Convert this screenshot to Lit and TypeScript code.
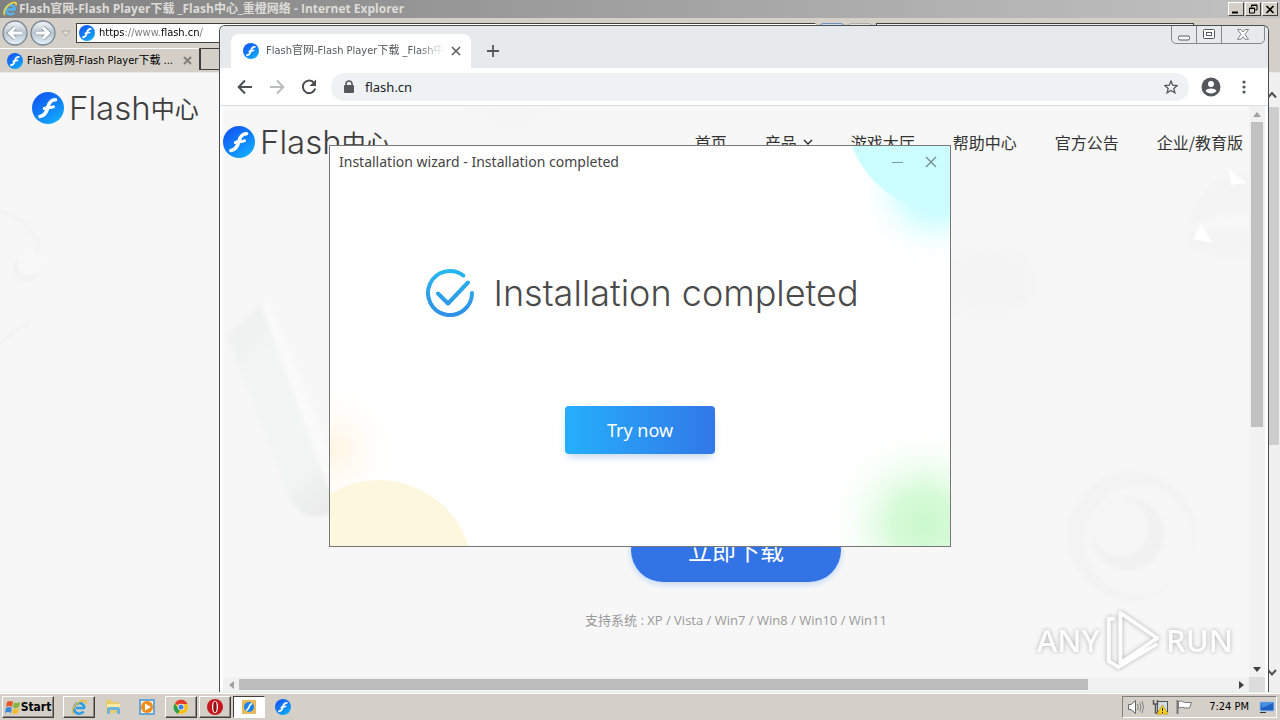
import { LitElement, html, css, svg } from "lit";
import { customElement, property } from "lit/decorators.js";

@customElement("flash-mark")
class FlashMark extends LitElement {
  static styles = css`
    :host { display: block; flex: none; }
    svg { display: block; width: 100%; height: 100%; }
  `;
  render() {
    return html`<svg viewBox="0 0 32 32" aria-hidden="true">
      <defs>
        <linearGradient id="g" x1="0.1" y1="0" x2="0.8" y2="1">
          <stop offset="0" stop-color="#1450ee" />
          <stop offset="0.5" stop-color="#0f7cfa" />
          <stop offset="1" stop-color="#14b0ff" />
        </linearGradient>
      </defs>
      <circle cx="16" cy="16" r="16" fill="url(#g)" />
      <path d="M23.500 7.800C18.500 7.800 17 11 16 15C14.700 20 12.500 24 8 24.500" fill="none" stroke="#fff" stroke-width="3.600" stroke-linecap="round" />
      <path d="M12.300 16.600C15 14.800 18 16.700 21.500 14.800" fill="none" stroke="#fff" stroke-width="3" stroke-linecap="round" />
    </svg>`;
  }
}

@customElement("flash-brand")
class FlashBrand extends LitElement {
  static styles = css`
    :host { display: flex; align-items: center; gap: 5px; height: 40px; color: #3f3f3f; }
    flash-mark { width: 32px; height: 32px; }
    .name { display: flex; align-items: center; font: 350 33px/36px Inter, sans-serif; white-space: nowrap; }
    .cjk { font: 400 24px/36px "Noto Sans CJK SC", sans-serif; }
  `;
  render() {
    return html`<flash-mark></flash-mark><span class="name">Flash<span class="cjk">中心</span></span>`;
  }
}

@customElement("ie-window")
class IeWindow extends LitElement {
  static styles = css`
    :host { display: flex; flex-direction: column; background: #d4d0c8; font: 11px/16px "DejaVu Sans Condensed", "Noto Sans CJK SC", sans-serif; color: #000; }
    button, input { font: inherit; padding: 0; margin: 0; border: 0; background: none; color: inherit; }
    svg { display: block; }
    .title { display: flex; align-items: center; gap: 1px; height: 18px; padding: 0 2px; background: linear-gradient(90deg, #808080, #c2c2c2); color: #dedbd6; }
    .title h1 { flex: 1; margin: 0; font: 700 12px/16px "Open Sans", "Noto Sans CJK SC", sans-serif; white-space: nowrap; }
    .box { width: 16px; height: 14px; background: #d4d0c8; border: 1px solid; border-color: #fff #404040 #404040 #fff; display: grid; place-items: center; color: #000; }
    .nav { display: flex; align-items: flex-start; height: 28px; padding: 2px 0 0 2px; gap: 4px; }
    .arrows { display: flex; gap: 2px; }
    .address { display: flex; align-items: center; gap: 4px; width: 740px; height: 20px; margin-top: 3px; padding-left: 2px; box-sizing: border-box; background: #fff; border: 1px solid #404040; border-right-color: #fff; }
    .address flash-mark, .tab flash-mark { width: 16px; height: 16px; }
    .address input { flex: 1; color: transparent; background: linear-gradient(90deg, #000 26px, #777 26px 61px, #000 61px 100px, #777 100px); -webkit-background-clip: text; background-clip: text; }
    .tool { width: 24px; height: 20px; margin-top: 3px; background: #cfe0f5; border: 1px solid #6f8fc0; border-radius: 3px; box-sizing: border-box; }
    .tool.plain { background: #e6e4e0; border-color: #aaa; }
    .field { width: 318px; height: 20px; margin-top: 3px; border: 1px solid #404040; box-sizing: border-box; background: #eee; }
    .tabs { display: flex; height: 24px; }
    .tab { display: flex; align-items: center; gap: 4px; width: 199px; padding: 0 7px; box-sizing: border-box; border-top: 1px solid #fff; }
    .tab span { flex: 1; white-space: nowrap; }
    .newtab { width: 40px; height: 22px; border: solid #404040; border-width: 1px 0 1px 2px; }
    .body { flex: 1; display: flex; min-height: 0; border-top: 1px solid #e8e8e8; background: #f7f7f7; }
    .page { flex: 1; position: relative; padding: 15px 0 0 32px; overflow: hidden; }
    .shade { position: absolute; left: 0; top: 130px; width: 42px; height: 150px; }
    .scroll { width: 17px; background: #f0f0f0; display: flex; flex-direction: column; }
    .scroll button { height: 34px; display: grid; place-items: end; padding: 0 2px 6px 0; }
    .scroll .thumb { flex: 339; background: #cdcdcd; margin-right: 1px; }
    .scroll .rest { flex: 214; }
  `;
  render() {
    return html`
      <div class="title">
        <svg width="16" height="16" viewBox="0 0 16 16"><path d="M13.500 8.500H5M13 8.500A4.700 4.700 0 1 0 12 11.600" fill="none" stroke="#4fb4f0" stroke-width="2.400" /><path d="M3 14C-1 12 6 2 12 1.500C14.500 1.300 14.500 3 13.800 4.500" fill="none" stroke="#f0d840" stroke-width="1.600" /></svg>
        <h1>Flash官网-Flash Player下载 _Flash中心_重橙网络 - Internet Explorer</h1>
        <button class="box" aria-label="Minimize"><svg width="10" height="9"><path d="M1 7.500H7" stroke="#000" stroke-width="2" /></svg></button>
        <button class="box" aria-label="Restore"><svg width="10" height="10"><path d="M3.500 3V1H9V6H7M3 1.500H9M1.500 4H6.500V9H1.500ZM1 4.500H7" fill="none" stroke="#000" /></svg></button>
        <button class="box" aria-label="Close"><svg width="10" height="9"><path d="M1.500 1L8.500 8M8.500 1L1.500 8" stroke="#000" stroke-width="1.700" /></svg></button>
      </div>
      <div class="nav">
        <div class="arrows">
          ${[0, 1].map((n) => html`<button aria-label=${n ? "Forward" : "Back"}>
            <svg width="26" height="26" viewBox="0 0 26 26"><defs><linearGradient id="b" x2="0" y2="1"><stop offset="0" stop-color="#f5f7f9" /><stop offset="0.5" stop-color="#b8c4cf" /><stop offset="1" stop-color="#e8f4fb" /></linearGradient></defs><circle cx="13" cy="13" r="12" fill="url(#b)" stroke="#7a8792" stroke-width="1.300" />
            <path d=${n ? "M6 13H18M13 7.500L18.500 13L13 18.500" : "M20 13H8M13 7.500L7.500 13L13 18.500"} fill="none" stroke="#8d9ba6" stroke-width="4.600" /><path d=${n ? "M6 13H18M13 7.500L18.500 13L13 18.500" : "M20 13H8M13 7.500L7.500 13L13 18.500"} fill="none" stroke="#fff" stroke-width="3" /></svg></button>`)}
        </div>
        <button aria-label="Recent pages"><svg width="12" height="26"><path d="M2 11H10L6 16Z" fill="#e6e3de" stroke="#aaa69e" /></svg></button>
        <div class="address"><flash-mark></flash-mark><input aria-label="Address" value="https://www.flash.cn/" /></div>
        <button class="tool" aria-label="Search"></button>
        <button class="tool plain" aria-label="Refresh"></button>
        <div class="field"></div>
      </div>
      <div class="tabs">
        <div class="tab"><flash-mark></flash-mark><span>Flash官网-Flash Player下载 ...</span>
          <button aria-label="Close tab"><svg width="9" height="9"><path d="M1 1L8 8M8 1L1 8" stroke="#857f7a" stroke-width="2" /></svg></button></div>
        <button class="newtab" aria-label="New tab"></button>
      </div>
      <div class="body">
        <div class="page">
          <svg class="shade" viewBox="0 0 42 150"><path d="M0 8L22 18L38 38L35 62M0 140L30 118" stroke="#f4f4f4" stroke-width="4" fill="none" /><circle cx="26" cy="66" r="13" fill="#f3f3f3" /><circle cx="30" cy="60" r="12" fill="#f8f8f8" /></svg>
          <flash-brand></flash-brand>
        </div>
        <div class="scroll">
          <button aria-label="Scroll up"><svg width="12" height="12"><path d="M2 8.500L6 4L10 8.500" fill="none" stroke="#505050" stroke-width="2" /></svg></button>
          <div class="thumb"></div><div class="rest"></div>
          <button aria-label="Scroll down"><svg width="12" height="24"><path d="M2 8L6 12.500L10 8" fill="none" stroke="#505050" stroke-width="2" /></svg></button>
        </div>
      </div>`;
  }
}

@customElement("chrome-window")
class ChromeWindow extends LitElement {
  static styles = css`
    :host { display: flex; flex-direction: column; box-sizing: border-box; border: 1px solid #4a4d50; border-bottom: 0; border-radius: 6px 6px 0 0; background: #fff; overflow: hidden; color: #333; font: 16px/24px "Noto Sans CJK SC", sans-serif; }
    button, input { font: inherit; padding: 0; margin: 0; border: 0; background: none; color: inherit; }
    svg { display: block; }
    .strip { display: flex; align-items: flex-end; height: 42px; background: #e7eaed; padding-left: 11px; }
    .tab { display: flex; align-items: center; gap: 7px; width: 240px; height: 34px; box-sizing: border-box; padding: 0 11px 0 12px; background: #fff; border-radius: 8px 8px 0 0; }
    .tab flash-mark { width: 16px; height: 16px; }
    .tab span { flex: 1; white-space: nowrap; font: 11px/16px "DejaVu Sans Condensed", "Noto Sans CJK SC", sans-serif; color: #55585c; -webkit-mask-image: linear-gradient(90deg, #000 86%, transparent); mask-image: linear-gradient(90deg, #000 86%, transparent); }
    .plus { margin: 0 0 10px 15px; }
    .caption { display: flex; align-self: flex-start; margin: -1px 3px 0 auto; border: 1px solid #85888c; border-radius: 0 0 5px 5px; }
    .caption button { width: 25px; height: 17px; display: grid; place-items: center; border-right: 1px solid #85888c; box-sizing: border-box; }
    .caption button:last-child { width: 42px; border: 0; }
    .bar { display: flex; align-items: center; height: 37px; padding: 0 17px; gap: 16px; border-bottom: 1px solid #dcdee0; }
    .omni { flex: 1; display: flex; align-items: center; height: 28px; gap: 9px; padding: 0 11px; margin-left: -2px; margin-right: -4px; border-radius: 14px; background: #eff2f4; }
    .omni input { flex: 1; font: 13px/20px "Noto Sans", sans-serif; color: #202124; }
    .view { flex: 1; min-height: 0; display: grid; grid-template: minmax(0, 1fr) 15px / minmax(0, 1fr) 16px; margin: 0 3px 0 3px; background: #f1f1f1; }
    .page { position: relative; background: #f7f7f7; overflow: hidden; display: flex; flex-direction: column; align-items: center; }
    .decor { position: absolute; inset: 0; width: 100%; height: 100%; }
    header { position: relative; display: flex; align-items: center; justify-content: space-between; align-self: stretch; padding: 16px 6px 0 0; }
    nav { display: flex; gap: 38px; }
    nav a { display: flex; align-items: center; gap: 6px; color: #333; text-decoration: none; white-space: nowrap; }
    .get { position: relative; margin-top: 356px; width: 210px; height: 64px; border-radius: 32px; background: #3273e6; color: #fff; font-size: 24px; box-shadow: 0 2px 6px #bcd4fb; }
    .os { position: relative; margin: 26px 0 0; font: 13px/24px "Open Sans", "Noto Sans CJK SC", sans-serif; color: #999; }
    .v { display: flex; flex-direction: column; }
    .v button { height: 16px; display: grid; place-items: center; }
    .v i { flex: 305; background: #c1c1c1; margin: 0 2px; }
    .v b { flex: 234; }
    .h { display: flex; }
    .h button { width: 16px; display: grid; place-items: center; }
    .h i { flex: 850; background: #bdbdbd; margin: 2px 0; }
    .h b { flex: 145; }
    .corner { background: #dcdcdc; }
  `;
  render() {
    const links = ["首页", "产品", "游戏大厅", "帮助中心", "官方公告", "企业/教育版"];
    return html`
      <div class="strip">
        <div class="tab"><flash-mark></flash-mark><span>Flash官网-Flash Player下载 _Flash中</span>
          <button aria-label="Close tab"><svg width="10" height="10"><path d="M1 1L9 9M9 1L1 9" stroke="#5a5d60" stroke-width="1.600" /></svg></button></div>
        <button class="plus" aria-label="New tab"><svg width="14" height="14"><path d="M7 1V13M1 7H13" stroke="#54575a" stroke-width="1.800" /></svg></button>
        <div class="caption">
          <button aria-label="Minimize"><svg width="12" height="12"><rect x="0.500" y="7" width="11" height="4" rx="1.500" fill="#fff" stroke="#54575a" /></svg></button>
          <button aria-label="Maximize"><svg width="12" height="11"><rect x="0.500" y="0.500" width="11" height="9" rx="1" fill="#fff" stroke="#54575a" /><rect x="3.500" y="3.500" width="5" height="3" fill="none" stroke="#54575a" /></svg></button>
          <button aria-label="Close"><svg width="12" height="11"><path d="M0.500 0.500H4L6 3L8 0.500H11.500L8 5.300L11.500 10.300H8L6 7.800L4 10.300H0.500L4 5.300Z" fill="#fff" stroke="#75787b" stroke-width="0.900" /></svg></button>
        </div>
      </div>
      <div class="bar">
        <button aria-label="Back"><svg width="16" height="16"><path d="M15 8H2M8 1.500L1.700 8L8 14.500" fill="none" stroke="#4c4f52" stroke-width="2" /></svg></button>
        <button aria-label="Forward"><svg width="16" height="16"><path d="M1 8H14M8 1.500L14.300 8L8 14.500" fill="none" stroke="#babcbe" stroke-width="2" /></svg></button>
        <button aria-label="Reload"><svg width="16" height="16"><path d="M13.200 4A6.300 6.300 0 1 0 14.200 9.500" fill="none" stroke="#4c4f52" stroke-width="2" /><path d="M15 0.500V7H8.500Z" fill="#4c4f52" /></svg></button>
        <div class="omni">
          <svg width="14" height="14"><rect x="2" y="5" width="10" height="8" rx="1" fill="#55585b" /><path d="M4 5.500V4A3 3 0 0 1 10 4V5.500" fill="none" stroke="#55585b" stroke-width="1.500" /></svg>
          <input aria-label="Address and search bar" value="flash.cn" />
          <button aria-label="Bookmark"><svg width="14" height="14" viewBox="0 0 14 14"><path d="M7 1L8.700 5.200L13.200 5.500L9.800 8.400L10.900 12.800L7 10.400L3.100 12.800L4.200 8.400L0.800 5.500L5.300 5.200Z" fill="none" stroke="#55585b" stroke-width="1.300" /></svg></button>
        </div>
        <button aria-label="Profile"><svg width="20" height="20"><circle cx="10" cy="10" r="9.500" fill="#54575b" /><circle cx="10" cy="7" r="3" fill="#fff" /><path d="M4.500 14C6.500 10.800 13.500 10.800 15.500 14C13 17.300 7 17.300 4.500 14Z" fill="#fff" /></svg></button>
        <button aria-label="Menu"><svg width="14" height="16"><circle cx="7" cy="3" r="1.600" fill="#54575b" /><circle cx="7" cy="8" r="1.600" fill="#54575b" /><circle cx="7" cy="13" r="1.600" fill="#54575b" /></svg></button>
      </div>
      <div class="view">
        <main class="page">
          <svg class="decor" viewBox="0 0 1026 571" preserveAspectRatio="none" aria-hidden="true">
            <defs>
              <filter id="s" x="-50%" y="-50%" width="200%" height="200%"><feGaussianBlur stdDeviation="12" /></filter>
              <filter id="t"><feGaussianBlur stdDeviation="2" /></filter>
              <linearGradient id="bar" x1="0.200" y1="0" x2="0.700" y2="1"><stop offset="0" stop-color="#efefef" /><stop offset="0.250" stop-color="#f2f5f4" /><stop offset="0.800" stop-color="#f1f5f4" /><stop offset="1" stop-color="#ececec" /></linearGradient>
            </defs>
            <g filter="url(#t)">
              <path d="M6 236Q4 230 8 226L38 198Q46 194 50 204L118 384Q122 400 108 408Q84 418 68 396Z" fill="url(#bar)" />
              <path d="M38 198Q46 194 50 204L118 374L106 384Z" fill="#fafafa" />
              <path d="M964 124Q975 70 1026 66V152Q990 156 964 140Z" fill="#f4f4f4" />
              <path d="M964 124Q990 106 1026 108V124Z" fill="#f8f8f8" />
              <circle cx="909" cy="430" r="64" fill="#f3f3f3" /><circle cx="916" cy="434" r="54" fill="#f7f7f7" />
              <circle cx="905" cy="428" r="36" fill="#f1f1f1" /><circle cx="897" cy="422" r="29" fill="#f6f6f6" />
            </g>
            <path d="M1006 63L1024 77L1008 79ZM978 118L990 137L970 133Z" fill="#fff" />
            <ellipse cx="290" cy="6" rx="44" ry="9" fill="#f3f3f3" filter="url(#s)" />
            <ellipse cx="768" cy="176" rx="44" ry="32" fill="#f3f3f3" filter="url(#s)" />
          </svg>
          <header><flash-brand></flash-brand>
            <nav>${links.map((l, n) => html`<a href="#">${l}${n === 1 ? html`<svg width="10" height="8"><path d="M1 2L5 6L9 2" fill="none" stroke="#333" stroke-width="1.500" /></svg>` : ""}</a>`)}</nav>
          </header>
          <button class="get">立即下载</button>
          <p class="os">支持系统 : XP / Vista / Win7 / Win8 / Win10 / Win11</p>
        </main>
        <div class="v">
          <button aria-label="Scroll up"><svg width="8" height="5"><path d="M4 0L8 5H0Z" fill="#a0a0a0" /></svg></button><i></i><b></b>
          <button aria-label="Scroll down"><svg width="8" height="5"><path d="M4 5L8 0H0Z" fill="#404040" /></svg></button>
        </div>
        <div class="h">
          <button aria-label="Scroll left"><svg width="5" height="8"><path d="M0 4L5 0V8Z" fill="#a0a0a0" /></svg></button><i></i><b></b>
          <button aria-label="Scroll right"><svg width="5" height="8"><path d="M5 4L0 0V8Z" fill="#404040" /></svg></button>
        </div>
        <div class="corner"></div>
      </div>`;
  }
}

@customElement("install-dialog")
class InstallDialog extends LitElement {
  static styles = css`
    :host { display: flex; flex-direction: column; align-items: center; box-sizing: border-box; border: 1px solid #777; background: #fff; overflow: hidden; color: #444; font: 14px/20px "Noto Sans", sans-serif; }
    button { font: inherit; padding: 0; border: 0; background: none; color: inherit; }
    svg { display: block; }
    .glow { position: absolute; inset: 0; width: 100%; height: 100%; }
    .title { position: relative; align-self: stretch; display: flex; align-items: center; gap: 20px; height: 32px; padding: 0 12px 0 9px; }
    .title h2 { flex: 1; margin: 0; font: inherit; }
    .status { position: relative; display: flex; align-items: center; gap: 18px; margin-top: 90px; padding-left: 4px; }
    .status p { margin: 0; font: 300 36px/50px Inter, sans-serif; white-space: nowrap; color: #4a4a4a; }
    .go { position: relative; margin-top: 88px; width: 150px; height: 48px; border-radius: 4px; background: linear-gradient(90deg, #25affb, #3278e8); color: #fff; font-size: 18px; box-shadow: 0 5px 10px -3px #b8cdf0; }
  `;
  render() {
    return html`
      <svg class="glow" viewBox="0 0 620 400" preserveAspectRatio="none" aria-hidden="true">
        <defs>
          <radialGradient id="c"><stop offset="0" stop-color="#c4fdff" /><stop offset="0.400" stop-color="#ccfdff" stop-opacity="0.900" /><stop offset="1" stop-color="#fff" stop-opacity="0" /></radialGradient>
          <radialGradient id="n"><stop offset="0" stop-color="#cbf8cd" /><stop offset="0.300" stop-color="#d0fad2" stop-opacity="0.900" /><stop offset="1" stop-color="#fff" stop-opacity="0" /></radialGradient>
          <radialGradient id="o"><stop offset="0" stop-color="#fff4e0" /><stop offset="1" stop-color="#fff" stop-opacity="0" /></radialGradient>
        </defs>
        <circle cx="605" cy="40" r="80" fill="url(#c)" />
        <circle cx="615" cy="-34" r="99" fill="#ccfeff" />
        <circle cx="594" cy="378" r="102" fill="url(#n)" />
        <circle cx="2" cy="304" r="68" fill="url(#o)" />
        <circle cx="49" cy="428" r="94" fill="#fef7e0" />
      </svg>
      <div class="title"><h2>Installation wizard - Installation completed</h2>
        <button aria-label="Minimize"><svg width="14" height="14"><path d="M2 7.500H13" stroke="#7c9a9b" /></svg></button>
        <button aria-label="Close"><svg width="14" height="14"><path d="M2 2L12 12M12 2L2 12" stroke="#6c8a8b" stroke-width="1.200" /></svg></button>
      </div>
      <div class="status">
        <svg width="50" height="50" viewBox="0 0 50 50" aria-hidden="true"><defs><linearGradient id="k" x1="0" y1="0" x2="0" y2="50" gradientUnits="userSpaceOnUse"><stop offset="0" stop-color="#27b9ee" /><stop offset="1" stop-color="#318de5" /></linearGradient></defs>
          <path d="M38.300 7.500A22 22 0 1 0 47 25M13 25.500L23 35.500L43 14.500" fill="none" stroke="url(#k)" stroke-width="4" stroke-linecap="round" stroke-linejoin="round" /></svg>
        <p>Installation completed</p>
      </div>
      <button class="go">Try now</button>`;
  }
}

@customElement("task-bar")
class TaskBar extends LitElement {
  static styles = css`
    :host { display: flex; align-items: center; height: 28px; box-sizing: border-box; padding: 1px 3px 0 2px; background: #d4d0c8; border-top: 1px solid #eceae6; box-shadow: inset 0 1px #fff; font: 12px/16px "DejaVu Sans Condensed", sans-serif; color: #000; }
    button { font: inherit; padding: 0; margin: 0; border: 0; background: none; color: inherit; }
    svg { display: block; }
    .raised { border: 1px solid; border-color: #fff #404040 #404040 #fff; box-shadow: inset -1px -1px #8c8880; }
    .start { display: flex; align-items: center; justify-content: center; width: 52px; height: 22px; font-weight: 700; box-sizing: border-box; }
    .apps { display: flex; gap: 2px; margin-left: 9px; flex: 1; }
    .app { width: 32px; height: 22px; display: grid; place-items: center; box-sizing: border-box; }
    .active { background: #fff; border: 1px solid; border-color: #404040 #fff #fff #404040; }
    flash-mark { width: 16px; height: 16px; }
    .tray { display: flex; align-items: center; gap: 7px; height: 20px; padding: 0 1px 0 4px; border: 1px solid; border-color: #808080 #fff #fff #808080; }
    time { margin: 0 3px 0 9px; font-size: 11px; }
  `;
  icons = [
    svg`<path d="M15 10H6M14.500 10A5.300 5.300 0 1 0 13.500 13.500" fill="none" stroke="#2e9be6" stroke-width="2.600"/><path d="M3.500 16C-1 13 7 3 14 2.500C17 2.500 16.500 4.500 15.500 6" fill="none" stroke="#e9be3a" stroke-width="1.500"/>`,
    svg`<path d="M2 2H7L8 4H15V15H2Z" fill="#e8cc6c"/><path d="M3 6H16V10H3Z" fill="#fbe9a4"/><path d="M3 16V11Q3 9 5 9H14Q16 9 16 11V16H13V12H6V16Z" fill="#6fb4e0"/>`,
    svg`<path d="M1 1H17V17H1Z" fill="#66a6d8"/><path d="M3 3H15V15H3Z" fill="#fff0dc"/><circle cx="9" cy="9" r="6" fill="#f18a17"/><path d="M7 5.500L13 9L7 12.500Z" fill="#fff"/>`,
    svg`<circle cx="9" cy="9" r="7" fill="#fbc116"/><path d="M9 9L3 5.300A7 7 0 0 1 15.500 6H9Z" fill="#e33b2e"/><path d="M9 9L6 16A7 7 0 0 1 2.800 5.500L6.500 11Z" fill="#279e4b"/><circle cx="9" cy="9" r="3.300" fill="#fff"/><circle cx="9" cy="9" r="2.600" fill="#3d7fe8"/>`,
    svg`<circle cx="9" cy="9" r="8" fill="#c4161c"/><ellipse cx="9" cy="9" rx="3" ry="6.200" fill="#fff"/><ellipse cx="9" cy="9" rx="1.700" ry="5.400" fill="#8e0f14"/>`,
    svg`<rect x="2" y="2" width="14" height="14" rx="1" fill="#e8b85c"/><circle cx="9" cy="9" r="5" fill="#1684ee"/><path d="M12 5.500Q10 6 9 9T6 12.500" fill="none" stroke="#fff" stroke-width="1.800"/>`,
  ];
  names = ["Internet Explorer", "Explorer", "Media Player", "Chrome", "Opera", "Flash installer"];
  render() {
    return html`
      <button class="start raised"><svg width="16" height="16"><path d="M2 3Q5 1 8 3L7 8Q4 6 1 8Z" fill="#e8532a"/><path d="M9 3.500Q12 5 15 3L14 8Q11 10 8 8.500Z" fill="#7fb53a"/><path d="M1 9Q4 7 6.800 9L6 14Q3 12 0 14Z" fill="#3c86d8"/><path d="M8 9.500Q11 11 14 9L13 14Q10 16 7 14Z" fill="#f3bd2f"/></svg>Start</button>
      <div class="apps">
        ${this.icons.map((i, n) => html`<button class="app ${n === 5 ? "active" : n === 0 || n > 2 ? "raised" : ""}" aria-label=${this.names[n]}><svg width="18" height="18" viewBox="0 0 18 18">${i}</svg></button>`)}
        <button class="app" aria-label="Flash"><flash-mark></flash-mark></button>
      </div>
      <div class="tray">
        <svg width="18" height="16"><path d="M1.500 5.500H4L8.500 1.500V14.500L4 10.500H1.500Z" fill="#fff" stroke="#666"/><path d="M10.500 5Q12 8 10.500 11M12.800 3.500Q15 8 12.800 12.500M15 2Q18 8 15 14" fill="none" stroke="#808080"/></svg>
        <svg width="17" height="16"><rect x="5.500" y="2.500" width="10" height="10" fill="#d0dbe4" stroke="#555"/><path d="M1.500 1V5H5.500V1M3.500 5V14H8" fill="none" stroke="#555" stroke-width="1.500"/><path d="M10.500 6L16 15H5Z" fill="#f8d21a" stroke="#b99400" stroke-width="0.700"/><path d="M10.500 9V12M10.500 13V14" stroke="#000"/></svg>
        <svg width="17" height="16"><path d="M1.500 1V15" stroke="#777" stroke-width="2"/><path d="M2.500 2.500Q6 1 8.500 3.500H15.500L13.500 9H9Q6 7.500 2.500 9Z" fill="#fff" stroke="#777"/></svg>
        <time>7:24 PM</time>
        <svg width="16" height="16"><path d="M1 3H15V12H1Z" fill="#1e62c4" stroke="#9cc3ee"/><path d="M2 4H14L3 9Z" fill="#4a90e2"/><path d="M1 13H7V14H1Z" fill="#333"/></svg>
      </div>`;
  }
}

@customElement("app-root")
class AppRoot extends LitElement {
  @property() watermark = ["ANY", "RUN"];
  static styles = css`
    :host { display: flex; flex-direction: column; height: 100vh; min-height: 600px; overflow: hidden; }
    .desktop { flex: 1; min-height: 0; position: relative; }
    ie-window { height: 100%; }
    chrome-window { position: absolute; left: 219px; top: 25px; right: 11px; bottom: 0; }
    install-dialog { position: absolute; left: 329px; top: 145px; width: 622px; height: 402px; }
    .mark { position: absolute; right: 47px; bottom: 20px; display: flex; align-items: center; gap: 5px; font: 600 31px/64px "Open Sans", sans-serif; color: #fff; opacity: 0.800; filter: drop-shadow(0 0 2px #999); pointer-events: none; }
    .mark svg { display: block; }
  `;
  render() {
    return html`
      <div class="desktop">
        <ie-window></ie-window>
        <chrome-window></chrome-window>
        <install-dialog></install-dialog>
        <div class="mark"><span>${this.watermark[0]}</span>
          <svg width="56" height="64" viewBox="0 0 58 64" aria-hidden="true"><path d="M16 4L54 30L16 56ZM10 10H4V54L14 60L54 36" fill="none" stroke="#fff" stroke-width="4" stroke-linejoin="round" /></svg>
          <span>${this.watermark[1]}</span></div>
      </div>
      <task-bar></task-bar>`;
  }
}
